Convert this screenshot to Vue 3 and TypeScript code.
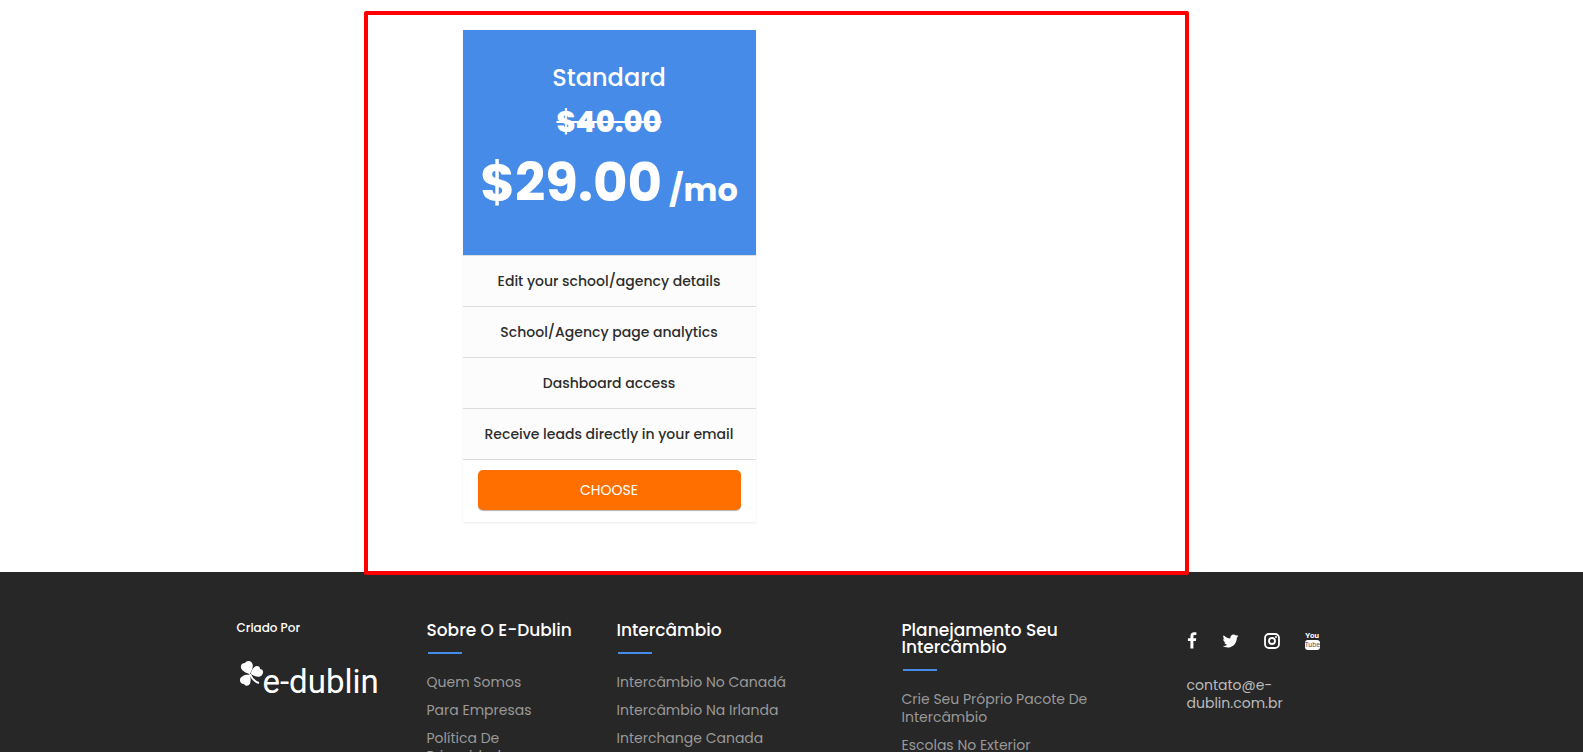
<script setup lang="ts">
interface LinkColumn {
  title: string
  links: string[]
}

const features: string[] = [
  'Edit your school/agency details',
  'School/Agency page analytics',
  'Dashboard access',
  'Receive leads directly in your email',
]

const columns: LinkColumn[] = [
  { title: 'Sobre O E-Dublin', links: ['Quem Somos', 'Para Empresas', 'Política De Privacidade'] },
  {
    title: 'Intercâmbio',
    links: ['Intercâmbio No Canadá', 'Intercâmbio Na Irlanda', 'Interchange Canada'],
  },
  {
    title: 'Planejamento Seu Intercâmbio',
    links: ['Crie Seu Próprio Pacote De Intercâmbio', 'Escolas No Exterior'],
  },
]
</script>

<template>
  <div class="page">
    <main class="pricing">
      <div class="container">
        <div class="highlight" aria-hidden="true"></div>
        <article class="plan">
          <header class="plan-head">
            <h2 class="plan-name">Standard</h2>
            <s class="old-price">$40.00</s>
            <p class="price"><span>$29.00</span><small>/mo</small></p>
          </header>
          <ul class="features">
            <li v-for="feature in features" :key="feature">{{ feature }}</li>
          </ul>
          <div class="plan-action">
            <button type="button" class="choose">CHOOSE</button>
          </div>
        </article>
      </div>
    </main>

    <footer class="footer">
      <div class="container footer-grid">
        <section class="col">
          <h3 class="made-by">Criado Por</h3>
          <a href="#" class="logo" aria-label="e-dublin">
            <svg class="clover" viewBox="0 0 24 26" aria-hidden="true">
              <g fill="#fff">
                <path d="M11 13C7 12 1 9 2 5c0-2 2-3 4-3 1-2 5-3 7 0 2 3 0 7-2 11z" />
                <path d="M12 13c0-4 3-8 6-8 2 0 3 1 3 3 3 0 4 3 2 6-2 3-7 2-11-1z" />
                <path d="M11 14c1 4 1 8-1 10-2 1-4 1-5-1-3 0-4-2-4-4 0-4 6-6 10-5z" />
              </g>
              <path d="M11 13c2 5 5 8 9 9" fill="none" stroke="#fff" stroke-width="2" />
            </svg>
            <span class="wordmark">e-dublin</span>
          </a>
        </section>

        <nav v-for="column in columns" :key="column.title" class="col" :aria-label="column.title">
          <h3 class="col-title">{{ column.title }}</h3>
          <ul class="links">
            <li v-for="link in column.links" :key="link">
              <a href="#">{{ link }}</a>
            </li>
          </ul>
        </nav>

        <section class="col contact">
          <div class="social">
            <a href="#" aria-label="Facebook">
              <svg width="10" height="18" viewBox="0 0 1024 1792" aria-hidden="true">
                <path fill="#fff" d="M959 12v264H802q-86 0-116 36t-30 108v189h293l-39 296H656v759H350V905H95V609h255V391q0-186 104-288.500T731 0q147 0 228 12z" />
              </svg>
            </a>
            <a href="#" aria-label="Twitter">
              <svg width="17" height="18" viewBox="0 0 1664 1792" aria-hidden="true">
                <path fill="#fff" d="M1620 408q-67 98-162 167 1 14 1 42 0 130-38 259.500T1305.500 1125 1121 1335.500t-258 146-323 54.500q-271 0-496-145 35 4 78 4 225 0 401-138-105-2-188-64.500T221 1033q33 5 61 5 43 0 85-11-112-23-185.500-111.500T108 710v-4q68 38 146 41-66-44-105-115t-39-154q0-88 44-163 121 149 294.500 238.500T820 653q-8-38-8-74 0-134 94.500-228.500T1135 256q140 0 236 102 109-21 205-78-37 115-142 178 93-10 186-50z" />
              </svg>
            </a>
            <a href="#" aria-label="Instagram">
              <svg width="16" height="16" viewBox="0 0 16 16" aria-hidden="true">
                <rect x="1" y="1" width="14" height="14" rx="4" fill="none" stroke="#fff" stroke-width="1.800" />
                <circle cx="8" cy="8" r="3" fill="none" stroke="#fff" stroke-width="1.800" />
                <circle cx="12" cy="4" r="1" fill="#fff" />
              </svg>
            </a>
            <a href="#" class="youtube" aria-label="YouTube">
              <span class="you">You</span>
              <span class="tube">Tube</span>
            </a>
          </div>
          <a href="#" class="email">contato@e-<wbr />dublin.com.br</a>
        </section>
      </div>
    </footer>
  </div>
</template>

<style>
body {
  margin: 0;
  background: #fff;
}
</style>

<style scoped>
.page {
  height: 100vh;
  overflow: hidden;
  font-family: Poppins, Inter, "Open Sans", sans-serif;
  color: #2d2d2d;
}

.container {
  position: relative;
  box-sizing: border-box;
  max-width: 1140px;
  margin: 0 auto;
}

.pricing {
  padding: 30px 0 50px;
}

.highlight {
  position: absolute;
  z-index: 1;
  top: -19px;
  bottom: -53px;
  left: 142px;
  right: 173px;
  border: 4px solid #f00;
  border-radius: 2px;
  pointer-events: none;
}

.plan {
  width: 293px;
  margin-left: 241px;
  box-shadow: 0 1px 2px rgba(0, 0, 0, 0.08);
  text-align: center;
}

.plan-head {
  box-sizing: border-box;
  height: 225px;
  padding-top: 30px;
  background: #468be8;
  color: #fff;
}

.plan-name {
  margin: 0;
  font-size: 24px;
  font-weight: 500;
  line-height: 36px;
}

.old-price {
  display: block;
  margin-top: 5px;
  font-size: 29px;
  font-weight: 800;
  line-height: 42px;
}

.price {
  display: flex;
  justify-content: center;
  align-items: baseline;
  gap: 7px;
  margin: 0;
  font-size: 53px;
  font-weight: 700;
  line-height: 80px;
}

.price small {
  font-size: 32px;
}

.features {
  margin: 0;
  padding: 0;
  list-style: none;
  background: #fcfcfc;
  border-top: 1px solid #ddd;
}

.features li {
  border-bottom: 1px solid #ddd;
  font-size: 14px;
  font-weight: 500;
  line-height: 50px;
}

.plan-action {
  padding: 10px 15px 12px;
}

.choose {
  display: block;
  width: 100%;
  height: 40px;
  border: 0;
  border-radius: 5px;
  background: #ff6f00;
  box-shadow: 0 1px 1px rgba(0, 0, 0, 0.3);
  color: #fff;
  font-family: inherit;
  font-size: 14px;
}

.footer {
  height: 100vh;
  padding-top: 48px;
  background: #272727;
}

.footer-grid {
  display: grid;
  grid-template-columns: 2fr 2fr 3fr 3fr 2fr;
}

.col {
  padding: 0 15px;
}

.made-by {
  margin: 0;
  color: #fff;
  font-size: 12px;
  font-weight: 500;
  line-height: 16px;
}

.logo {
  display: flex;
  align-items: flex-start;
  margin-top: 25px;
  padding-left: 2px;
  color: #fff;
  text-decoration: none;
}

.clover {
  width: 24px;
  height: 26px;
}

.wordmark {
  font-family: Roboto, sans-serif;
  font-size: 33px;
  font-weight: 400;
  line-height: 42px;
}

.col-title {
  margin: 0;
  padding-top: 2px;
  color: #fff;
  font-size: 17px;
  font-weight: 500;
  line-height: 17px;
}

.col-title::after {
  content: "";
  display: block;
  width: 34px;
  height: 2px;
  margin: 13px 0 0 1px;
  background: #468be8;
}

.links {
  margin: 19px 0 0;
  padding: 0 8px 0 0;
  list-style: none;
}

.links li {
  margin-bottom: 10px;
  font-size: 14px;
  line-height: 18px;
}

.links a {
  color: #999;
  text-decoration: none;
}

.social {
  display: flex;
  align-items: center;
  height: 42px;
  gap: 25px;
}

.social a {
  display: block;
  color: #fff;
  text-decoration: none;
}

.social svg {
  display: block;
}

.youtube {
  text-align: center;
}

.you,
.tube {
  display: block;
  font-family: Roboto, sans-serif;
  font-size: 8px;
  font-weight: 700;
  line-height: 8px;
}

.tube {
  border-radius: 3px;
  background: #fff;
  color: #555;
  font-size: 7px;
  font-weight: 400;
  line-height: 10px;
}

.email {
  display: block;
  margin-top: 14px;
  color: #bbb;
  font-size: 14px;
  line-height: 18px;
  text-decoration: none;
}
</style>
